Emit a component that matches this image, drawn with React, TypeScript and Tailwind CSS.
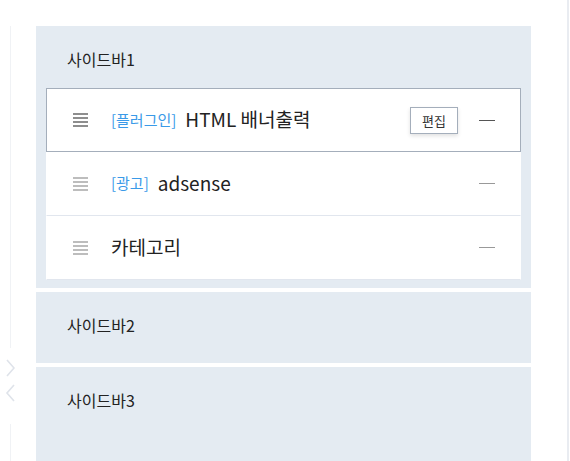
type Widget = {
  tag?: string
  name: string
  editable?: boolean
}

const widgets: Widget[] = [
  { tag: '[플러그인]', name: 'HTML 배너출력', editable: true },
  { tag: '[광고]', name: 'adsense' },
  { name: '카테고리' },
]

function Grip({ active }: { active?: boolean }) {
  const line = active ? 'bg-[#8e8e8e]' : 'bg-[#bdbdbd]'
  return (
    <div className="flex flex-col gap-[2px] w-[15px]">
      <span className={`h-[2px] ${line}`} />
      <span className={`h-[2px] ${line}`} />
      <span className={`h-[2px] ${line}`} />
      <span className={`h-[2px] ${line}`} />
    </div>
  )
}

function WidgetRow({ w, active }: { w: Widget; active?: boolean }) {
  return (
    <div
      className={
        active
          ? 'flex items-center h-[64px] pl-[26px] pr-[25px] border border-[#a4aebb]'
          : 'flex items-center h-[64px] pl-[26px] pr-[25px] border-x border-b border-[#e1e6ee] border-x-transparent'
      }
    >
      <Grip active={active} />
      <div className="flex items-center ml-[23px] pb-[3px] flex-1 leading-none">
        {w.tag && (
          <span className="text-[15px] text-[#3a9ae8] mr-[9px] pt-[1px]">{w.tag}</span>
        )}
        <span className="text-[19px] text-[#222]">{w.name}</span>
      </div>
      {w.editable && (
        <button className="h-[27px] w-[48px] border border-[#a4aebb] bg-white text-[13px] leading-none text-[#333] shadow-[0_2px_4px_rgba(0,0,0,0.12)] mr-[21px]">
          편집
        </button>
      )}
      <span className={`w-[16px] h-px ${active ? 'bg-[#555]' : 'bg-[#999]'}`} />
    </div>
  )
}

function Sidebar({ title, children, className }: { title: string; children?: React.ReactNode; className?: string }) {
  return (
    <div className={`bg-[#e4ebf2] ${className ?? ''}`}>
      <div className="h-[62px] flex items-center pl-[31px] pt-[4px] text-[16px] leading-none text-[#222]">{title}</div>
      {children}
    </div>
  )
}

function Chevron({ dir }: { dir: 'left' | 'right' }) {
  return (
    <svg width="10" height="18" viewBox="0 0 10 18" fill="none" stroke="#dfe3ea" strokeWidth="1.6">
      {dir === 'right' ? <polyline points="2,1 9,9 2,17" /> : <polyline points="9,1 2,9 9,17" />}
    </svg>
  )
}

export default function App() {
  return (
    <div
      className="w-[570px] h-[461px] overflow-hidden bg-white flex"
      style={{ fontFamily: '"Noto Sans CJK KR", "Noto Sans", sans-serif' }}
    >
      {/* left rail */}
      <div className="w-[36px] flex flex-col pt-[26px] pl-[10px]">
        <div className="h-[322px] w-px bg-[#f0f2f5]" />
        <div className="flex flex-col -ml-[5px] mt-[11px] gap-[7px]">
          <Chevron dir="right" />
          <Chevron dir="left" />
        </div>
        <div className="flex-1 w-px bg-[#f0f2f5] mt-[22px]" />
      </div>

      {/* sidebars */}
      <div className="w-[495px] pt-[26px] flex flex-col gap-[4px]">
        <Sidebar title="사이드바1" className="pb-[8px]">
          <div className="mx-[10px] bg-white">
            {widgets.map((w, i) => (
              <WidgetRow key={w.name} w={w} active={i === 0} />
            ))}
          </div>
        </Sidebar>
        <Sidebar title="사이드바2" className="h-[71px]" />
        <Sidebar title="사이드바3" className="flex-1" />
      </div>

      <div className="w-[36px]" />
      <div className="w-[2px] bg-[#e9ecf1]" />
    </div>
  )
}
